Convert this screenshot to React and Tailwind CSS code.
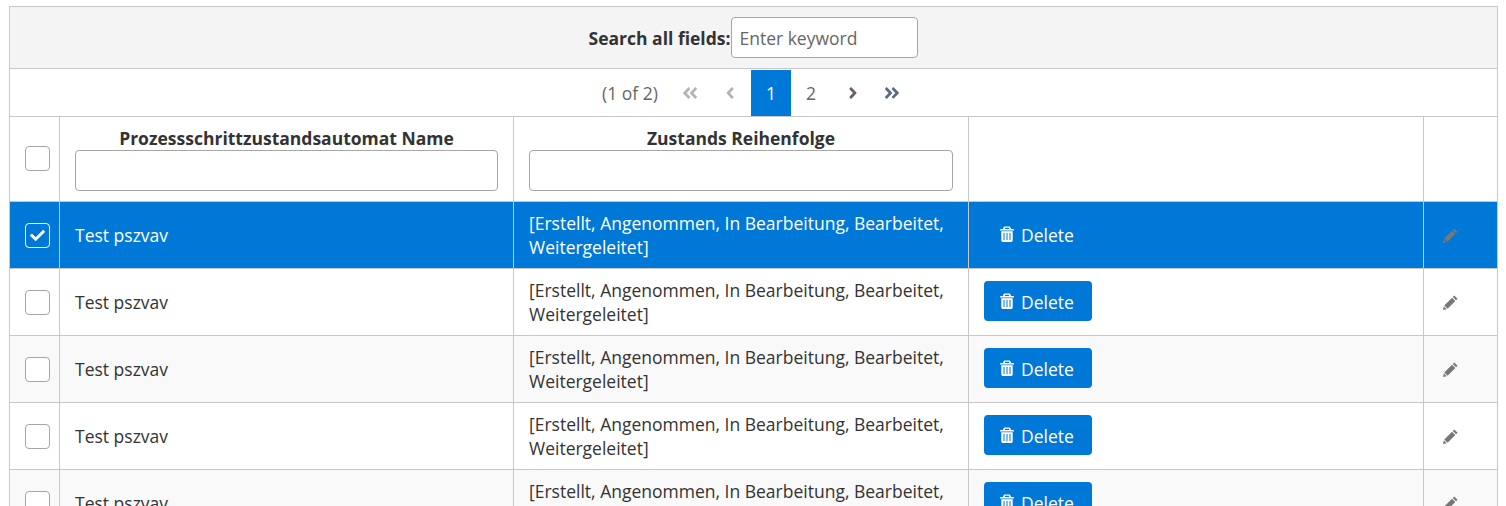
import React from "react";
import { FaAngleDoubleLeft, FaAngleLeft, FaAngleRight, FaAngleDoubleRight, FaCheck } from "react-icons/fa";

const Trash = () => (
  <svg width="14" height="16" viewBox="0 0 14 16" className="shrink-0" fill="currentColor">
    <path d="M5 0.5h4c.8 0 1.3.5 1.6 1.200L11 3h2.300c.4 0 .7.3.7.7v.5c0 .2-.2.4-.4.4H.4C.2 4.600 0 4.400 0 4.200v-.5C0 3.300.3 3 .7 3H3l.4-1.300C3.700 1 4.200.5 5 .5zM4.700 3h4.600l-.4-1c-.1-.2-.2-.3-.4-.3H5.500c-.2 0-.3.1-.4.3zM1.300 5.300h11.400v8.900c0 1-.7 1.800-1.600 1.800H2.900c-.9 0-1.600-.8-1.600-1.800zM3.500 7v7h1V7zm3 0v7h1V7zm3 0v7h1V7z" fillRule="evenodd" />
  </svg>
);

const Pencil = () => (
  <svg width="15" height="15" viewBox="0 0 14 14" fill="#777777">
    <path d="M10.500 0.400 13.600 3.500 12.200 4.900 9.100 1.800zM8.400 2.500 11.500 5.600 4.300 12.800 1.200 9.700z" />
    <path d="M.8 10.500 3.500 13.200 0 14z" />
  </svg>
);

const Check = ({ checked }) => (
  <span className={`flex h-[25px] w-[25px] items-center justify-center rounded-[4px] border ${checked ? "border-white bg-[#0078d7] text-white" : "border-[#a6a6a6] bg-white"}`}>
    {checked && <FaCheck size={15} />}
  </span>
);

const Row = ({ selected, odd }) => {
  const bg = selected ? "bg-[#0078d7] text-white" : odd ? "bg-[#f9f9f9] text-[#333333]" : "bg-white text-[#333333]";
  const cell = "border-r border-[#c8c8c8] last:border-r-0";
  return (
    <div className={`grid h-[67px] shrink-0 grid-cols-[50px_454px_455px_455px_1fr] border-b border-[#c8c8c8] ${bg}`}>
      <div className={`${cell} flex items-center pl-[15px]`}><Check checked={selected} /></div>
      <div className={`${cell} flex items-center px-[15px]`}>Test pszvav</div>
      <div className={`${cell} flex items-center px-[15px] leading-6`}>
        <span>[Erstellt, Angenommen, In Bearbeitung, Bearbeitet, Weitergeleitet]</span>
      </div>
      <div className={`${cell} flex items-center px-[15px] pb-[2px]`}>
        <button className={`flex h-[40px] w-[108px] items-center gap-[7px] rounded-[4px] pl-[16px] text-white ${selected ? "" : "bg-[#0078d7]"}`}>
          <Trash /> <span className="pt-[2px]">Delete</span>
        </button>
      </div>
      <div className={`${cell} flex items-center pl-[19px]`}><Pencil /></div>
    </div>
  );
};

export default function App() {
  return (
    <div className="h-[506px] overflow-hidden bg-white pl-[9px] pr-[8px] pt-[6px] text-[17.5px] text-[#333333] [font-family:'Open_Sans',sans-serif]">
      <div className="flex flex-col border-x border-t border-[#c8c8c8]">
        <div className="flex h-[62px] shrink-0 items-center justify-center border-b border-[#c8c8c8] bg-[#f4f4f4]">
          <span className="pt-[2px] font-bold">Search all fields:</span>
          <input readOnly placeholder="Enter keyword" className="ml-[1px] h-[41px] w-[187px] rounded-[4px] border border-[#a6a6a6] bg-white px-[7px] text-[17.5px] outline-none placeholder:text-[#666666]" />
        </div>
        <div className="flex h-[48px] shrink-0 items-end justify-center border-b border-[#c8c8c8] bg-white text-[#666666]">
          <div className="flex h-[46px] items-center">
            <span className="mr-[12px] pl-[7px]">(1 of 2)</span>
            <span className="flex h-[46px] w-[40px] items-center justify-center text-[#b4b4b4]"><FaAngleDoubleLeft size={18} /></span>
            <span className="flex h-[46px] w-[41px] items-center justify-center text-[#b4b4b4]"><FaAngleLeft size={18} /></span>
            <span className="flex h-[46px] w-[40px] items-center justify-center bg-[#0078d7] text-white">1</span>
            <span className="flex h-[46px] w-[40px] items-center justify-center">2</span>
            <span className="ml-[2px] flex h-[46px] w-[41px] items-center justify-center text-[#6b5f5a]"><FaAngleRight size={18} /></span>
            <span className="flex h-[46px] w-[38px] items-center pl-[9px] text-[#5b6b80]"><FaAngleDoubleRight size={18} /></span>
          </div>
        </div>
        <div className="grid h-[85px] shrink-0 grid-cols-[50px_454px_455px_455px_1fr] border-b border-[#c8c8c8] bg-white">
          <div className="flex items-center border-r border-[#c8c8c8] pl-[15px] pb-[1px]"><Check /></div>
          <div className="flex flex-col items-center border-r border-[#c8c8c8] px-[15px] pt-[9px]">
            <span className="font-bold leading-6">Prozessschrittzustandsautomat Name</span>
            <input readOnly className="h-[41px] w-full rounded-[4px] border border-[#a6a6a6] bg-white" />
          </div>
          <div className="flex flex-col items-center border-r border-[#c8c8c8] px-[15px] pt-[9px]">
            <span className="font-bold leading-6">Zustands Reihenfolge</span>
            <input readOnly className="h-[41px] w-full rounded-[4px] border border-[#a6a6a6] bg-white" />
          </div>
          <div className="border-r border-[#c8c8c8]" />
          <div />
        </div>
        <Row selected />
        <Row />
        <Row odd />
        <Row />
        <Row odd />
      </div>
    </div>
  );
}
